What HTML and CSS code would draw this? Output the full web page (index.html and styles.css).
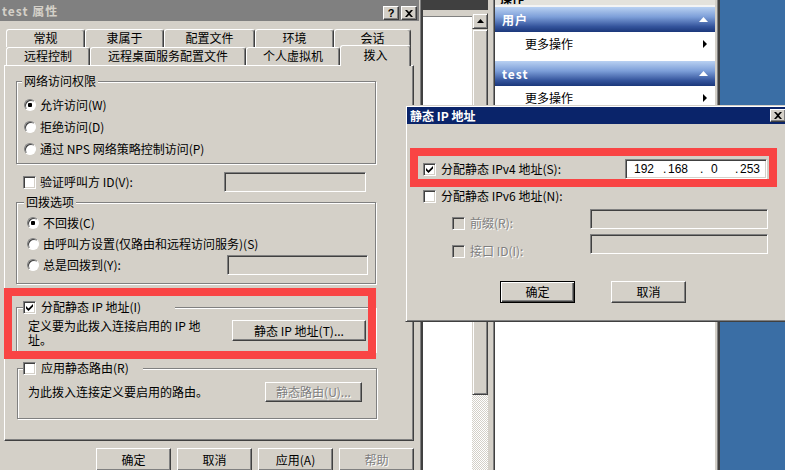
FILE: index.html
```html
<!DOCTYPE html>
<html lang="zh-CN">
<head>
    <meta charset="UTF-8">
    <title>test 属性</title>
    <link rel="stylesheet" href="styles.css">
</head>
<body>
    <!-- MMC window behind the dialogs -->
    <div class="window mmc">
        <div class="list">
            <div class="list-top"></div>
            <div class="list-body">
                <div class="list-white"><div class="list-head"></div></div>
                <div class="vscroll">
                    <div class="sb-btn"><svg width="7" height="4" viewBox="0 0 7 4"><path d="M0 4h7L3.5 0z"/></svg></div>
                    <div class="sb-thumb"></div>
                    <div class="sb-track"></div>
                </div>
            </div>
        </div>
        <div class="splitter"></div>
        <div class="actions">
            <div class="act-head"><span>操作</span></div>
            <div class="act-bar"><span>用户</span><svg width="9" height="5" viewBox="0 0 9 5"><path d="M0 5h9L4.5 0z" fill="#fff"/></svg></div>
            <div class="act-item"><span>更多操作</span><svg width="4" height="8" viewBox="0 0 4 8"><path d="M0 0v8l4-4z"/></svg></div>
            <div class="act-bar"><span>test</span><svg width="9" height="5" viewBox="0 0 9 5"><path d="M0 5h9L4.5 0z" fill="#fff"/></svg></div>
            <div class="act-item"><span>更多操作</span><svg width="4" height="8" viewBox="0 0 4 8"><path d="M0 0v8l4-4z"/></svg></div>
        </div>
        <div class="mmc-edge"></div>
    </div>

    <!-- test 属性 -->
    <div class="window props">
        <div class="titlebar">
            <span class="title">test 属性</span>
            <div class="tbtns">
                <span class="tbtn help">?</span>
                <span class="tbtn"><svg width="8" height="7" viewBox="0 0 8 7"><path d="M0 0h2l2 2 2-2h2L5 3.5 8 7H6L4 5 2 7H0l3-3.5z"/></svg></span>
            </div>
        </div>

        <div class="tabs">
            <div class="tabrow">
                <div class="tab tab-general">常规</div>
                <div class="tab tab-member">隶属于</div>
                <div class="tab tab-profile">配置文件</div>
                <div class="tab tab-env">环境</div>
                <div class="tab tab-session">会话</div>
            </div>
            <div class="tabrow">
                <div class="tab tab-remote">远程控制</div>
                <div class="tab tab-rds">远程桌面服务配置文件</div>
                <div class="tab tab-vm">个人虚拟机</div>
                <div class="tab tab-dialin active">拨入</div>
            </div>
        </div>

        <div class="panel">
            <fieldset class="group g-access">
                <legend>网络访问权限</legend>
                <div class="gbody">
                    <div class="opt"><span class="radio on"></span><span>允许访问(W)</span></div>
                    <div class="opt"><span class="radio"></span><span>拒绝访问(D)</span></div>
                    <div class="opt"><span class="radio"></span><span>通过 NPS 网络策略控制访问(P)</span></div>
                </div>
            </fieldset>

            <div class="verify-row">
                <span class="chk"></span>
                <span>验证呼叫方 ID(V):</span>
                <span class="field verify-field"></span>
            </div>

            <fieldset class="group g-callback">
                <legend>回拨选项</legend>
                <div class="gbody">
                    <div class="opt"><span class="radio on"></span><span>不回拨(C)</span></div>
                    <div class="opt short"><span class="radio"></span><span>由呼叫方设置(仅路由和远程访问服务)(S)</span></div>
                    <div class="opt"><span class="radio"></span><span>总是回拨到(Y):</span><span class="field callback-field"></span></div>
                </div>
            </fieldset>

            <fieldset class="group g-static-ip">
                <legend class="check-legend ip-legend"><span class="chk on"><svg width="7" height="7" viewBox="0 0 7 7"><path d="M0 2v2.5L2.5 7 7 2.5V0L2.5 4.5z"/></svg></span><span>分配静态 IP 地址(I)</span></legend>
                <div class="gbody">
                    <div class="desc-row">
                        <p class="desc">定义要为此拨入连接启用的 IP 地<br>址。</p>
                        <button class="btn ip-btn">静态 IP 地址(T)...</button>
                    </div>
                </div>
            </fieldset>

            <fieldset class="group g-route">
                <legend class="check-legend route-legend"><span class="chk"></span><span>应用静态路由(R)</span></legend>
                <div class="gbody">
                    <div class="desc-row route-row">
                        <p>为此拨入连接定义要启用的路由。</p>
                        <button class="btn route-btn" disabled>静态路由(U)...</button>
                    </div>
                </div>
            </fieldset>
        </div>

        <div class="dlg-buttons">
            <button class="btn">确定</button>
            <button class="btn">取消</button>
            <button class="btn">应用(A)</button>
            <button class="btn" disabled>帮助</button>
        </div>

        <div class="mark mark-props"></div>
    </div>

    <!-- 静态 IP 地址 -->
    <div class="window ipdlg">
        <div class="titlebar active">
            <span class="title">静态 IP 地址</span>
            <span class="tbtn"><svg width="8" height="7" viewBox="0 0 8 7"><path d="M0 0h2l2 2 2-2h2L5 3.5 8 7H6L4 5 2 7H0l3-3.5z"/></svg></span>
        </div>
        <div class="ip-body">
            <div class="ip-row">
                <span class="chk on"><svg width="7" height="7" viewBox="0 0 7 7"><path d="M0 2v2.5L2.5 7 7 2.5V0L2.5 4.5z"/></svg></span>
                <span>分配静态 IPv4 地址(S):</span>
                <div class="field ip-field">
                    <span class="oct o1">192</span><span class="dot d1">.</span>
                    <span class="oct o2">168</span><span class="dot d2">.</span>
                    <span class="oct o3">0</span><span class="dot d3">.</span>
                    <span class="oct">253</span>
                </div>
            </div>
            <div class="ip-row v6">
                <span class="chk"></span>
                <span>分配静态 IPv6 地址(N):</span>
            </div>
            <div class="ip-row sub prefix">
                <div class="sub-label"><span class="chk off"></span><span class="dis">前缀(R):</span></div>
                <span class="field sub-field"></span>
            </div>
            <div class="ip-row sub iface">
                <div class="sub-label"><span class="chk off"></span><span class="dis">接口 ID(I):</span></div>
                <span class="field sub-field"></span>
            </div>
            <div class="ip-buttons">
                <button class="btn default">确定</button>
                <button class="btn">取消</button>
            </div>
        </div>
        <div class="mark mark-ip"></div>
    </div>
</body>
</html>
```

FILE: styles.css
```css
* {
    margin: 0;
    padding: 0;
    box-sizing: border-box;
}

body {
    width: 785px;
    height: 470px;
    overflow: hidden;
    position: relative;
    background-color: #3a6ea5;
    font-family: "Noto Sans CJK SC", sans-serif;
    font-size: 12px;
    line-height: 14px;
    color: #000;
}

.window {
    position: absolute;
    background-color: #d4d0c8;
}

/* shared controls */
.titlebar {
    display: flex;
    align-items: center;
    justify-content: space-between;
    font-weight: bold;
    color: #fff;
}

.tbtn {
    width: 16px;
    height: 14px;
    display: flex;
    align-items: center;
    justify-content: center;
    background-color: #d4d0c8;
    border: 1px solid;
    border-color: #fff #404040 #404040 #fff;
    box-shadow: inset -1px -1px #808080;
    color: #000;
}

.tbtn.help {
    font-family: "Liberation Sans", sans-serif;
    font-size: 11px;
    font-weight: bold;
    line-height: 12px;
}

.btn {
    width: 75px;
    height: 23px;
    background-color: #d4d0c8;
    border: 1px solid;
    border-color: #fff #404040 #404040 #fff;
    box-shadow: inset -1px -1px #808080;
    font: inherit;
    color: #000;
}

.btn:disabled {
    color: #808080;
    text-shadow: 1px 1px #fff;
}

.btn.default {
    border: 1px solid #000;
    box-shadow: inset 1px 1px #fff, inset -1px -1px #404040, inset -2px -2px #808080;
}

.chk {
    width: 13px;
    height: 13px;
    flex: none;
    display: flex;
    align-items: center;
    justify-content: center;
    background-color: #fff;
    border: 1px solid;
    border-color: #808080 #fff #fff #808080;
    box-shadow: inset 1px 1px #404040, inset -1px -1px #d4d0c8;
}

.chk.off {
    background-color: #d4d0c8;
}

.radio {
    width: 12px;
    height: 12px;
    flex: none;
    border-radius: 50%;
    background-color: #fff;
    border: 1px solid;
    border-color: #808080 #fff #fff #808080;
    box-shadow: inset 1px 1px #404040;
}

.radio.on {
    background: radial-gradient(circle, #000 0 2px, #fff 2.5px);
}

.field {
    height: 20px;
    flex: none;
    background-color: #d4d0c8;
    border: 1px solid;
    border-color: #808080 #fff #fff #808080;
    box-shadow: inset 1px 1px #404040, inset -1px -1px #d4d0c8;
}

.dis {
    color: #808080;
    text-shadow: 1px 1px #fff;
}

.mark {
    position: absolute;
    border: 8px solid #f94444;
}

/* MMC window */
.mmc {
    left: 422px;
    top: 0;
    width: 298px;
    height: 470px;
    display: flex;
}

.list {
    width: 66px;
    display: flex;
    flex-direction: column;
    border-left: 1px solid #404040;
}

.list-top {
    height: 10px;
    background-color: #404040;
}

.list-body {
    flex: 1;
    display: flex;
}

.list-white {
    flex: 1;
    background-color: #fff;
}

.list-head {
    height: 7px;
    background-color: #d4d0c8;
    border-bottom: 1px solid #808080;
}

.vscroll {
    width: 16px;
    display: flex;
    flex-direction: column;
    padding-top: 3px;
}

.sb-btn, .sb-thumb {
    border: 1px solid;
    border-color: #d4d0c8 #404040 #404040 #d4d0c8;
    box-shadow: inset 1px 1px #fff, inset -1px -1px #808080;
}

.sb-btn {
    height: 16px;
    display: flex;
    align-items: center;
    justify-content: center;
}

.sb-thumb {
    height: 366px;
}

.sb-track {
    flex: 1;
    background: repeating-conic-gradient(#d4d0c8 0 25%, #fff 0 50%) 0 0 / 2px 2px;
}

.splitter {
    width: 7px;
    box-shadow: inset -1px 0 #404040, inset -2px 0 #808080;
}

.actions {
    width: 220px;
    display: flex;
    flex-direction: column;
    background-color: #fff;
}

.act-head {
    height: 7px;
    overflow: hidden;
    display: flex;
    align-items: flex-end;
    padding-left: 5px;
    background-color: #e4e2dc;
    border-bottom: 2px solid #f4f4f4;
    font-weight: bold;
}

.act-bar {
    height: 25px;
    display: flex;
    align-items: center;
    justify-content: space-between;
    padding: 0 7px;
    background: linear-gradient(#b9d1f2, #7c9ed8 40%, #34549c 78%, #1b377a);
    color: #fff;
    font-weight: bold;
    letter-spacing: 1px;
}

.act-item {
    height: 29px;
    display: flex;
    align-items: flex-start;
    justify-content: space-between;
    padding: 5px 8px 0 30px;
}

.act-item svg {
    margin-top: 3px;
}

.mmc-edge {
    width: 5px;
    background: linear-gradient(to right, #d4d0c8 0 2px, #808080 2px 3px, #404040 3px);
}

/* test 属性 */
.props {
    left: 0;
    top: 0;
    width: 422px;
    height: 480px;
    border-right: 1px solid #404040;
    box-shadow: inset -1px 0 #808080;
}

.props .titlebar {
    height: 21px;
    margin-right: 2px;
    padding: 0 2px;
    background-color: #808080;
    color: #d4d0c8;
}

.props .title {
    letter-spacing: 1px;
}

.tbtns {
    display: flex;
    gap: 2px;
    align-self: flex-end;
    margin-bottom: 1px;
}

.tabs {
    padding: 8px 0 0 6px;
}

.tabrow {
    display: flex;
    height: 18px;
}

.tab {
    height: 18px;
    flex: none;
    background-color: #d4d0c8;
    border: 1px solid #fff;
    border-bottom: 0;
    border-right-color: #404040;
    border-radius: 3px 3px 0 0;
    box-shadow: inset -1px 0 #808080;
    text-align: center;
    line-height: 16px;
}

.tab.active {
    height: 21px;
    margin-top: -2px;
    position: relative;
    z-index: 1;
    line-height: 17px;
}

.tab-general { width: 79px; }
.tab-member { width: 79px; }
.tab-profile { width: 91px; }
.tab-env { width: 79px; }
.tab-session { width: 77px; }
.tab-remote { width: 84px; }
.tab-rds { width: 156px; }
.tab-vm { width: 94px; }
.tab-dialin { width: 71px; }

.panel {
    margin-left: 4px;
    width: 410px;
    height: 376px;
    display: flex;
    flex-direction: column;
    align-items: flex-start;
    padding-left: 11px;
    border: 1px solid;
    border-color: #fff #404040 #404040 #fff;
    box-shadow: inset -1px -1px #808080;
}

.group {
    width: 360px;
    border: 1px solid #808080;
    box-shadow: inset 1px 1px #fff, 1px 1px #fff;
}

.group legend {
    height: 14px;
    line-height: 14px;
    padding: 0 2px;
    margin-left: 5px;
    background-color: #d4d0c8;
}

.check-legend {
    display: flex;
    align-items: center;
    gap: 5px;
}

.group legend.check-legend {
    padding: 0;
}

.opt {
    height: 22px;
    display: flex;
    align-items: center;
    gap: 4px;
}

.opt.short {
    height: 20px;
}

.g-access {
    margin-top: 8px;
}

.g-access .gbody {
    padding: 6px 0 3px 7px;
}

.verify-row {
    width: 350px;
    height: 20px;
    margin-top: 8px;
    padding-left: 7px;
    display: flex;
    align-items: center;
    gap: 4px;
}

.verify-field {
    width: 142px;
    margin-left: auto;
}

.g-callback {
    margin-top: 3px;
}

.g-callback legend {
    margin-left: 7px;
}

.g-callback .gbody {
    padding: 3px 7px 7px 10px;
}

.callback-field {
    width: 141px;
    margin-left: auto;
}

.g-static-ip {
    margin-top: 16px;
}

.group legend.ip-legend {
    width: 152px;
    margin-left: 6px;
}

.g-static-ip .gbody {
    padding: 5px 9px 4px 11px;
}

.desc-row {
    display: flex;
    align-items: flex-start;
    justify-content: space-between;
}

.desc {
    line-height: 14px;
}

.ip-btn {
    width: 134px;
    height: 21px;
    margin-top: 1px;
}

.g-route {
    margin-top: 9px;
    margin-left: 1px;
}

.group legend.route-legend {
    width: 120px;
    margin-left: 5px;
}

.g-route .gbody {
    padding: 7px 14px 16px 10px;
}

.route-row {
    height: 20px;
    align-items: center;
}

.route-btn {
    width: 97px;
    height: 20px;
}

.dlg-buttons {
    display: flex;
    justify-content: flex-end;
    gap: 6px;
    padding: 7px 7px 0 0;
}

.mark-props {
    left: 4px;
    top: 288px;
    width: 372px;
    height: 71px;
}

/* 静态 IP 地址 */
.ipdlg {
    left: 405px;
    top: 105px;
    width: 385px;
    height: 217px;
    padding: 1px;
    border: 1px solid;
    border-color: #d4d0c8 #404040 #404040 #d4d0c8;
    box-shadow: inset 1px 1px #fff, inset -1px -1px #808080;
}

.ipdlg .titlebar {
    height: 17px;
    padding: 0 2px 0 3px;
    background-color: #0a246a;
}

.ipdlg .tbtn {
    height: 13px;
}

.ip-body {
    padding: 35px 0 0 16px;
}

.ip-row {
    width: 344px;
    height: 20px;
    display: flex;
    align-items: center;
    gap: 5px;
}

.ip-row.v6 {
    margin-top: 7px;
}

.ip-row.sub {
    width: 345px;
    align-items: flex-start;
    padding-left: 29px;
}

.ip-row.prefix {
    margin-top: 3px;
}

.ip-row.iface {
    margin-top: 5px;
}

.sub-label {
    display: flex;
    align-items: center;
    gap: 5px;
    margin-top: 7px;
}

.iface .sub-label {
    margin-top: 10px;
}

.sub-field {
    width: 178px;
    margin-left: auto;
}

.ip-field {
    width: 142px;
    margin-left: auto;
    display: flex;
    align-items: center;
    padding-left: 8px;
    background-color: #fff;
    font-family: "Liberation Sans", sans-serif;
    font-size: 12px;
}

.oct, .dot {
    flex: none;
}

.o1 { width: 29px; }
.d1 { width: 5px; }
.o2 { width: 32px; }
.d2 { width: 11px; }
.o3 { width: 24px; }
.d3 { width: 5px; }

.ip-buttons {
    display: flex;
    gap: 36px;
    margin: 27px 0 0 77px;
}

.ip-buttons .btn {
    height: 22px;
}

.mark-ip {
    left: 4px;
    top: 42px;
    width: 367px;
    height: 39px;
}
```
